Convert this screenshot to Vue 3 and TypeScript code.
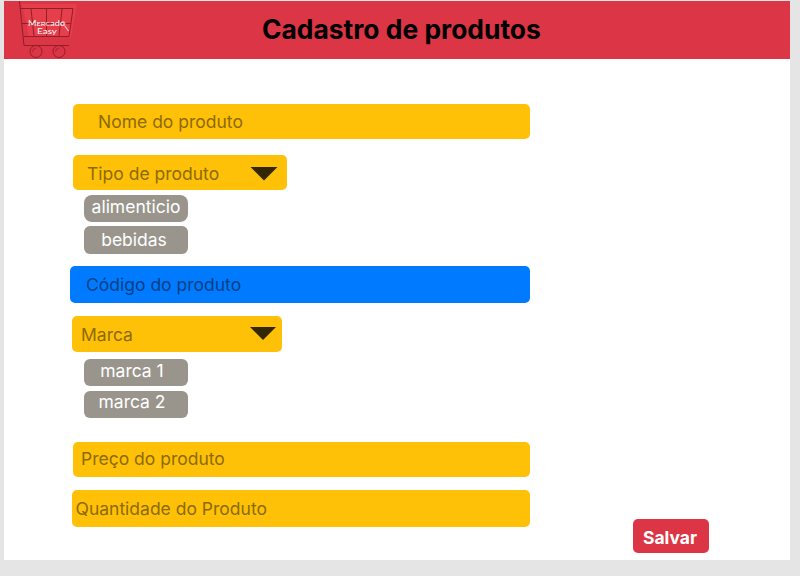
<script setup lang="ts">
import { ref } from 'vue'

const tipos = ref<string[]>(['alimenticio', 'bebidas'])
const marcas = ref<string[]>(['marca 1', 'marca 2'])
</script>

<template>
  <div class="canvas">
    <main class="page">
      <header class="header">
        <svg class="logo" viewBox="0 0 70 58" width="70" height="58">
          <path d="M8 3h55l-6 33H15z" fill="#f04550" opacity=".55" />
          <g fill="none" stroke="#8d2029" stroke-width="1">
            <path d="M5.500 0L10 44.500h45M6.500 7.500H59L55 35.500H9.500M7.500 22.500h49.500M17 8l3 27M32.500 8v27M48 8l-3 27" />
            <circle cx="22" cy="50.500" r="6" />
            <circle cx="45" cy="50.500" r="6" />
            <path d="M18.500 51q0-4 4-4M41.500 51q0-4 4-4" opacity=".7" />
          </g>
          <g fill="#fff" font-family="Lato, sans-serif">
            <text x="14" y="24.500" font-size="7" textLength="37" lengthAdjust="spacingAndGlyphs">M<tspan font-size="5.700">ERC</tspan>ado</text>
            <text x="23" y="32.600" font-size="6.600" textLength="20" lengthAdjust="spacingAndGlyphs">Easy</text>
          </g>
          <g fill="none" stroke="#f7c5c9">
            <circle cx="49" cy="22.500" r="2" stroke-width=".7" />
            <path d="M50.500 24.500l4 5.500" stroke-width="1.200" />
          </g>
        </svg>
        <h1 class="title">Cadastro de produtos</h1>
      </header>

      <form class="form" @submit.prevent>
        <div class="fields">
          <div class="field nome"><span>Nome do produto</span></div>
          <div class="field tipo">
            <span>Tipo de produto</span>
            <svg class="arrow" width="28" height="14" viewBox="0 0 28 14"><path d="M.5 0h27L14 13.500z" fill="#332701" /></svg>
          </div>
          <ul class="options tipos">
            <li v-for="t in tipos" :key="t"><span>{{ t }}</span></li>
          </ul>
          <div class="field codigo"><span>Código do produto</span></div>
          <div class="field marca">
            <span>Marca</span>
            <svg class="arrow" width="26" height="13" viewBox="0 0 26 13"><path d="M0 0h26L13 13z" fill="#332701" /></svg>
          </div>
          <ul class="options marcas">
            <li v-for="m in marcas" :key="m"><span>{{ m }}</span></li>
          </ul>
          <div class="field preco"><span>Preço do produto</span></div>
          <div class="field quantidade"><span>Quantidade do Produto</span></div>
        </div>
        <button class="save" type="submit">Salvar</button>
      </form>
    </main>
  </div>
</template>

<style>
body {
  margin: 0;
  background: #e5e5e5;
}
</style>

<style scoped>
.canvas {
  box-sizing: border-box;
  width: 800px;
  height: 576px;
  padding: 1px 10px 16px 4px;
  background: #e5e5e5;
  font-family: Inter, sans-serif;
  overflow: hidden;
}
.page {
  height: 559px;
  background: #fff;
}
.header {
  display: flex;
  height: 58px;
  background: #dc3545;
}
.logo {
  margin-left: 10px;
  flex: none;
}
.title {
  margin: 0 0 0 178px;
  font-size: 26.400px;
  line-height: 57px;
  font-weight: 700;
  color: #000;
  white-space: nowrap;
}
.form {
  display: flex;
  align-items: flex-end;
  height: 494px;
}
.fields {
  display: flex;
  flex-direction: column;
  align-self: flex-start;
  width: 460px;
  margin-left: 66px;
  padding-top: 45px;
}
.field {
  box-sizing: border-box;
  display: flex;
  margin-left: 3px;
  height: 35px;
  border-radius: 5px;
  background: #ffc107;
  color: #8c6a04;
  font-size: 17.500px;
  line-height: 35px;
  white-space: nowrap;
}
.arrow {
  flex: none;
  margin-left: auto;
}
.nome { padding-left: 25px; }
.tipo {
  margin-top: 16px;
  width: 214px;
  padding: 1px 9px 0 14px;
}
.tipo .arrow { margin-top: 11px; }
.codigo {
  margin: 12px 0 0;
  height: 37px;
  padding-left: 16px;
  background: #007bff;
  color: #004085;
  line-height: 37px;
}
.marca {
  margin: 13px 0 0 2px;
  width: 210px;
  height: 36px;
  padding: 0 6px 0 9px;
  line-height: 37px;
}
.marca .arrow { margin-top: 11px; }
.preco {
  margin-top: 24px;
  padding-left: 8px;
  line-height: 33px;
}
.quantidade {
  margin: 13px 0 0 2px;
  height: 37px;
  padding-left: 3.500px;
  line-height: 37px;
}
.options {
  display: flex;
  flex-direction: column;
  gap: 4px;
  margin: 5px 0 0 14px;
  padding: 0;
  list-style: none;
}
.marcas { margin-top: 7px; gap: 5px; }
.options li {
  width: 104px;
  height: 27px;
  border-radius: 6px;
  background: #99958c;
  color: #fff;
  font-size: 17.500px;
  line-height: 23px;
  text-align: center;
}
.tipos li:first-child { border-radius: 8px; }
.tipos li:last-child { line-height: 27px; height: 28px; padding-right: 4px; width: 100px; }
.marcas li { padding-right: 8px; width: 96px; }
.marcas li:last-child { line-height: 21px; }
.save {
  margin: 0 0 0 103px;
  width: 76px;
  height: 34px;
  padding: 4px 2px 0 0;
  border: 0;
  border-radius: 5px;
  background: #dc3545;
  color: #fff;
  font: 700 17.500px/30px Inter, sans-serif;
}
</style>
